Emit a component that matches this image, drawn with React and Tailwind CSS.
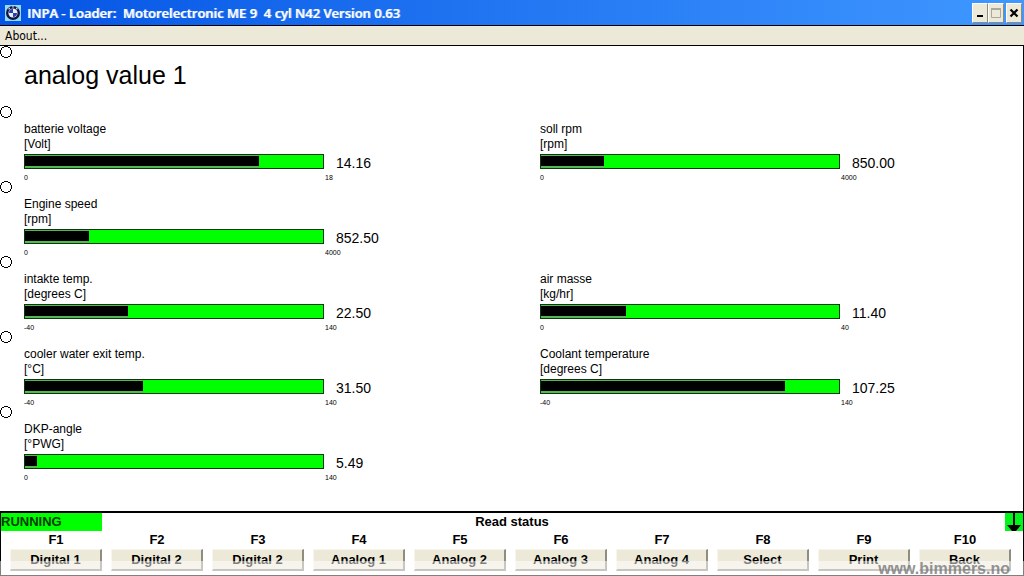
const METERS = [
  [
    { label: 'batterie voltage', unit: '[Volt]', min: 0, max: 18, value: '14.16' },
    { label: 'soll rpm', unit: '[rpm]', min: 0, max: 4000, value: '850.00' },
  ],
  [{ label: 'Engine speed', unit: '[rpm]', min: 0, max: 4000, value: '852.50' }],
  [
    { label: 'intakte temp.', unit: '[degrees C]', min: -40, max: 140, value: '22.50' },
    { label: 'air masse', unit: '[kg/hr]', min: 0, max: 40, value: '11.40' },
  ],
  [
    { label: 'cooler water exit temp.', unit: '[°C]', min: -40, max: 140, value: '31.50' },
    { label: 'Coolant temperature', unit: '[degrees C]', min: -40, max: 140, value: '107.25' },
  ],
  [{ label: 'DKP-angle', unit: '[°PWG]', min: 0, max: 140, value: '5.49' }],
];

const KEYS = [
  ['F1', 'Digital 1'],
  ['F2', 'Digital 2'],
  ['F3', 'Digital 2'],
  ['F4', 'Analog 1'],
  ['F5', 'Analog 2'],
  ['F6', 'Analog 3'],
  ['F7', 'Analog 4'],
  ['F8', 'Select'],
  ['F9', 'Print'],
  ['F10', 'Back'],
];

function RoundelIcon() {
  return (
    <svg width="16" height="16" viewBox="0 0 16 16" className="shrink-0" aria-hidden="true">
      <rect width="16" height="16" fill="#8fdcfa" />
      <circle cx="8" cy="8" r="7" fill="#14143c" />
      <circle cx="8" cy="8" r="4.6" fill="#e8eefc" />
      <path d="M8 8V4A4 4 0 0 0 4 8Z" fill="#2b3fae" />
      <path d="M8 8v4a4 4 0 0 0 4-4Z" fill="#2b3fae" />
      <path d="M3.6 4.4l1.2-1.6M7.2 1.9h1.6M11.2 2.8l1.2 1.6" stroke="#d5dcf4" strokeWidth="1.2" />
    </svg>
  );
}

function LineMarker() {
  return (
    <svg width="12" height="12" viewBox="0 0 12 12" className="shrink-0" aria-hidden="true">
      <path
        d="M4 .5h4M4 11.5h4M.5 4v4M11.5 4v4M2 1.5h2M8 1.5h2M2 10.5h2M8 10.5h2M1.5 2v2M10.5 2v2M1.5 8v2M10.5 8v2"
        fill="none"
        stroke="#000"
        shapeRendering="crispEdges"
      />
    </svg>
  );
}

function WindowButton({ label, children }) {
  return (
    <button
      type="button"
      aria-label={label}
      className="flex h-5 w-4 items-center justify-center border border-t-white border-l-white border-r-[#8c8a7e] border-b-[#8c8a7e] bg-[#ece9d8]"
    >
      <svg width="12" height="14" viewBox="0 0 12 14" className="shrink-0" aria-hidden="true">
        {children}
      </svg>
    </button>
  );
}

function TitleBar() {
  return (
    <header className="flex h-[26px] items-center border-b border-black bg-linear-to-r from-[#0553e4] to-[#3f97ff] pr-[2px] pl-[5px]">
      <RoundelIcon />
      <h1 className="ml-[6px] flex-1 truncate font-['Open_Sans',sans-serif] text-[13px] leading-5 font-semibold whitespace-pre text-white [text-shadow:1px_0_#a9c6f8]">
        {'INPA - Loader:  Motorelectronic ME 9  4 cyl N42 Version 0.63'}
      </h1>
      <div className="flex">
        <WindowButton label="Minimize">
          <rect x="3" y="9" width="6" height="2" fill="#000" />
        </WindowButton>
        <WindowButton label="Maximize">
          <path d="M1.5 3v8.5h9V3.5h-9" fill="none" stroke="#aca899" />
          <path d="M1 3h10" fill="none" stroke="#aca899" strokeWidth="2" />
        </WindowButton>
      </div>
      <div className="ml-[2px] flex">
        <WindowButton label="Close">
          <path d="M2.5 3.5l7 7M9.5 3.5l-7 7" stroke="#000" strokeWidth="2.2" />
        </WindowButton>
      </div>
    </header>
  );
}

function Meter({ label, unit, min, max, value }) {
  const percent = ((Number(value) - min) / (max - min)) * 100;
  return (
    <section>
      <h3 className="text-[12px] leading-[15px]">{label}</h3>
      <p className="text-[12px] leading-[15px]">{unit}</p>
      <div className="mt-[2px] flex h-[15px] items-center">
        <div
          role="meter"
          aria-label={label}
          aria-valuemin={min}
          aria-valuemax={max}
          aria-valuenow={Number(value)}
          className="h-[15px] w-[300px] border border-[#0a3a0a] bg-[#00ff00]"
        >
          <div className="h-[13px] border-t border-b-2 border-[#55b855] bg-black" style={{ width: `${percent}%` }} />
        </div>
        <output className="ml-3 pt-[2px] text-[14px] leading-4">{value}</output>
      </div>
      <div className="mt-[5px] flex text-[7px] leading-2">
        <span className="w-[301px]">{min}</span>
        <span>{max}</span>
      </div>
    </section>
  );
}

function FunctionKey({ name, action }) {
  const id = `key-${name}`;
  return (
    <div className="flex flex-col">
      <label htmlFor={id} className="text-center leading-[17px]">
        {name}
      </label>
      <button
        id={id}
        type="button"
        className="mt-[1px] h-[22px] border-t border-r-2 border-b-2 border-l border-t-[#f7f5ec] border-r-[#8f8d80] border-b-[#8f8d80] border-l-[#f7f5ec] bg-[#ece9d8] leading-4"
      >
        {action}
      </button>
    </div>
  );
}

export default function App() {
  return (
    <div className="relative flex min-h-screen flex-col bg-white font-['Liberation_Sans',Arial,sans-serif] text-black">
      <TitleBar />
      <nav className="flex h-5 items-center border-b border-black bg-[#ece9d8] pl-[5px]">
        <button type="button" className="font-['DejaVu_Sans_Condensed','DejaVu_Sans',sans-serif] text-[12px] leading-4">
          About...
        </button>
      </nav>
      <main className="flex-1 border-r border-black">
        <div className="flex h-[60px]">
          <LineMarker />
          <h2 className="ml-3 pt-[15px] text-[25px] leading-7">analog value 1</h2>
        </div>
        {METERS.map((row) => (
          <div key={row[0].label} className="flex h-[75px]">
            <LineMarker />
            <div className="ml-3 grid flex-1 grid-cols-2 gap-[33px] pt-4">
              {row.map((meter) => (
                <Meter key={meter.label} {...meter} />
              ))}
            </div>
          </div>
        ))}
      </main>
      <footer className="border-x border-t-2 border-b border-black pb-1 text-[13px] font-bold">
        <div className="grid h-[18px] grid-cols-[1fr_auto_1fr] leading-[18px]">
          <span className="w-[101px] bg-[#00ff00] text-[#003c00]">RUNNING</span>
          <span>Read status</span>
          <svg width="18" height="18" viewBox="0 0 18 18" className="justify-self-end" aria-hidden="true">
            <rect width="18" height="18" fill="#00f61a" />
            <path d="M9 0v12" stroke="#000" strokeWidth="2" />
            <path d="M2 12h14l-5 6H7z" fill="#000" />
          </svg>
        </div>
        <div className="grid grid-cols-10 gap-x-[9px] pr-3 pl-[9px]">
          {KEYS.map(([name, action]) => (
            <FunctionKey key={name} name={name} action={action} />
          ))}
        </div>
      </footer>
      <div className="pointer-events-none absolute inset-x-0 bottom-0 flex h-[15px] items-center justify-end bg-white/50 pr-[14px] text-[16px] leading-[15px] font-bold text-[#77777a]/80">
        www.bimmers.no
      </div>
    </div>
  );
}
